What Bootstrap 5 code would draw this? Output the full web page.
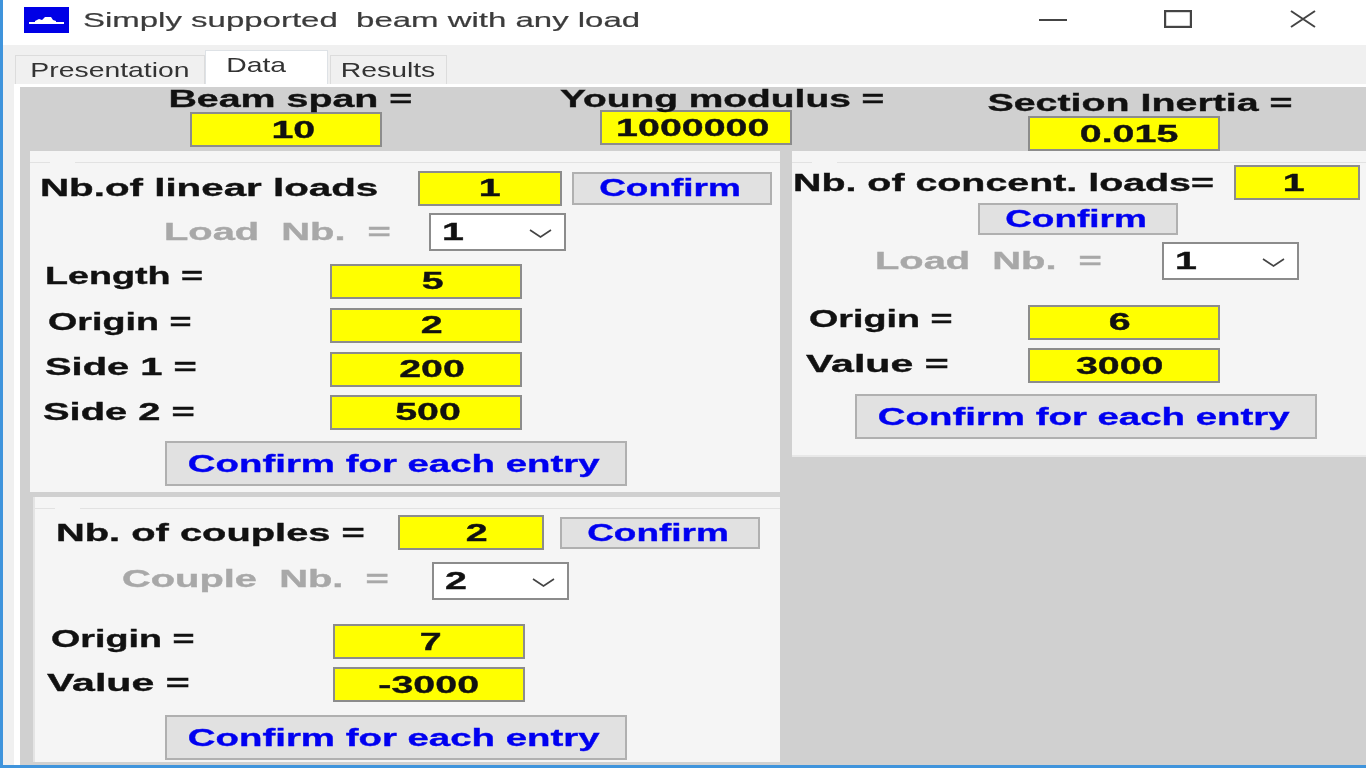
<!DOCTYPE html>
<html lang="en"><head><meta charset="utf-8"><title>Simply supported beam with any load</title>
<link href="https://cdn.jsdelivr.net/npm/bootstrap@5.3.0/dist/css/bootstrap.min.css" rel="stylesheet">
<script src="https://cdn.jsdelivr.net/npm/bootstrap@5.3.0/dist/js/bootstrap.bundle.min.js"></script>
<style>
html,body{margin:0;height:768px;overflow:hidden;background:#fff}
body{font-family:"Liberation Sans",Arial,sans-serif}
.appwin{width:1366px;height:768px;border-left:3px solid #3f94dc;border-bottom:3px solid #3f94dc;overflow:hidden;filter:blur(.5px);background:#f0f0f0;color:#111}
.sx{--k:1.64;display:inline-block;white-space:nowrap;transform:scaleX(var(--k));transform-origin:center}
.sl{transform-origin:left center}
.kb{--k:1.54}.kg{--k:1.6}.kn{--k:1.57}.kw{--k:1.71}.kl{--k:1.68}.ks{--k:1.66}.ky{--k:1.62}
.bt{font-weight:700;font-size:24px;line-height:26px;-webkit-text-stroke:.35px currentColor}
.titlebar{height:45px;background:#fff;padding-left:21px}
.logo{width:45px;height:26px;margin-top:-6px;margin-right:14px;flex:none}
.ttl{--k:1.57;font-size:21px;color:#3c3c3c;margin-top:-5px;-webkit-text-stroke:.2px currentColor}
.wbtn{flex:none}
.winctl{margin-left:auto;padding-right:49px;gap:97px;margin-top:-7px}
.tabstrip{height:39px;padding:0 0 0 12px;align-items:flex-end;border:0;background:#f0f0f0;flex-wrap:nowrap}
.tabstrip .nav-link{font-size:21px;line-height:24px;color:#333;border:1px solid #dcdcdc;border-bottom:0;border-radius:0;padding:0;height:29px;background:#f0f0f0;margin:0;display:flex;align-items:center;justify-content:center}
.tabstrip .nav-link .sx{--k:1.35}
.tabstrip .nav-link.active{height:34px;background:#fff;color:#333;padding:0 20px 6px 0}
.t1{width:190px}.t2{width:123px}.t3{width:117px;margin-left:2px!important}
.pagewrap{margin-left:11px;border-top:3px solid #fff;border-left:6px solid #fff;height:681px;background:#d0d0d0}
.pagehead{height:64px}
.hcol{flex:none;width:192px;display:flex;flex-direction:column;align-items:center}
.hc1{margin-left:170px}.hc2{margin-left:218px}.hc3{margin-left:236px}
.hlbl{height:26px;width:100%;display:flex;justify-content:center}
.hc1 .hlbl{margin-top:-1px;padding-left:9px}.hc2 .hlbl{margin-top:-1px;padding-left:52px}.hc3 .hlbl{margin-top:3px;padding-left:32px}
.hc2 .fld{margin-top:-2px}
.fld{background:#ff0;border:2px solid #8c8c8c;height:35px;display:flex;align-items:center;justify-content:center;flex:none;border-radius:0;padding:0}
.w192{width:192px}.w144{width:144px}.w146{width:146px}.w126{width:126px}
.n14{padding-left:14px}.n12{padding-left:12px}.n10{padding-left:10px}.n4{padding-left:4px}.m8{padding-right:8px}.m6{padding-right:6px}
.pbody{align-items:flex-start}
.leftcol{margin-left:10px;width:750px;flex:none}
.rightcol{margin-left:12px;width:574px;flex:none}
.grp{background:#f5f5f5;padding-top:11px}
.g1{height:341px}.g2{height:265px;margin-left:3px;margin-top:5px;width:747px;border-left:2px solid #e4e4e4}.g3{height:306px;border-bottom:2px solid #e8e8e8}
.gline{height:1px;background:linear-gradient(to right,#e2e2e2 20px,#f5f5f5 20px,#f5f5f5 45px,#e2e2e2 45px)}
.frow{display:flex;align-items:center;flex:none}
.lb{flex:none}
.btnx{background:#e1e1e1;border:2px solid #b0b0b0;border-radius:0;color:#0000f0;padding:0;display:flex;align-items:center;justify-content:center;flex:none}
.btnx:hover,.btnx:active{background:#e1e1e1!important;border-color:#b0b0b0!important;color:#0000f0!important}
.small-b{width:200px;height:33px;padding-right:4px}
.big-b{width:462px;height:45px;padding-right:4px}
.gray{color:#a8a8a8}
.cmb{width:137px;height:38px;background:#fff;border:2px solid #8c8c8c;display:flex;align-items:center;justify-content:space-between;padding:0 12px 0 11px;flex:none;border-radius:0}
.cmb svg{flex:none;margin-top:3px}
.r1{margin-top:8px;height:34px;padding-left:10px}.r1 .lb{width:378px}.r1 .btnx{margin-left:10px}
.r2{margin-top:8px;height:38px;padding-left:134px}.r2 .lb{width:265px}
.r3{margin-top:13px;height:34px}.r4,.r5{margin-top:10px;height:34px}.r6{margin-top:9px;height:34px}
.i15{padding-left:15px}.i15 .lb{width:285px}.i18{padding-left:18px}.i18 .lb{width:282px}.i13{padding-left:13px}.i13 .lb{width:287px}
.bigrow{margin-top:12px;justify-content:flex-start;padding-left:135px}
.up5 .lb{margin-bottom:10px}.up3 .lb{margin-bottom:6px}.up2 .lb{margin-bottom:4px}
.c1{margin-top:6px;height:35px;padding-left:21px}.c1 .lb{width:342px}.c1 .btnx{margin-left:16px;height:32px}
.c2{margin-top:11px;height:39px;padding-left:87px}.c2 .lb{width:310px}
.c3{margin-top:24px;height:35px;padding-left:16px}.c3 .lb{width:282px}
.c4{margin-top:8px;height:35px;padding-left:12px}.c4 .lb{width:286px}
.c5{margin-top:13px;padding-left:130px}
.k1{margin-top:2px;height:35px;padding-left:1px}.k1 .lb{width:441px}
.k2{margin-top:3px;justify-content:flex-start;padding-left:186px}
.k2 .btnx{height:32px}
.k3{margin-top:7px;height:38px;padding-left:83px}.k3 .lb{width:287px}
.k4{margin-top:25px;height:34px;padding-left:17px}.k4 .lb{width:219px}
.k5{margin-top:9px;height:35px;padding-left:14px}.k5 .lb{width:222px}
.k6{margin-top:11px;padding-left:63px}
</style></head>
<body>
<div class="appwin">
  <div class="titlebar d-flex align-items-center">
    <svg class="logo" viewBox="0 0 45 26" role="img" aria-label="Beam icon"><rect width="45" height="26" fill="#0000e6"/><path d="M5 15h35v2H5zM11 14l4-2 3 1 3-3 6 0 2 3 3 1v1H11z" fill="#fff"/></svg>
    <span class="sx sl ttl">Simply supported&nbsp; beam with any load</span>
    <div class="d-flex align-items-center winctl">
      <svg class="wbtn" width="28" height="18" viewBox="0 0 28 18"><path d="M0 10h28" stroke="#444" stroke-width="2"/></svg>
      <svg class="wbtn" width="28" height="18" viewBox="0 0 28 18"><rect x="1" y="1" width="26" height="16" fill="none" stroke="#444" stroke-width="2.4"/></svg>
      <svg class="wbtn" width="28" height="18" viewBox="0 0 28 18"><path d="M2 1l24 16M26 1L2 17" stroke="#444" stroke-width="2" fill="none"/></svg>
    </div>
  </div>
  <ul class="nav nav-tabs tabstrip">
    <li class="nav-item"><a class="nav-link t1" href="#"><span class="sx">Presentation</span></a></li>
    <li class="nav-item"><a class="nav-link active t2" href="#"><span class="sx">Data</span></a></li>
    <li class="nav-item t3"><a class="nav-link" href="#"><span class="sx">Results</span></a></li>
  </ul>
  <div class="pagewrap">
    <div class="pagehead d-flex">
      <div class="hcol hc1"><div class="hlbl bt"><span class="sx">Beam span =</span></div><div class="fld w192 bt n14"><span class="sx">10</span></div></div>
      <div class="hcol hc2"><div class="hlbl bt"><span class="sx ky">Young modulus =</span></div><div class="fld w192 bt m6"><span class="sx">1000000</span></div></div>
      <div class="hcol hc3"><div class="hlbl bt"><span class="sx">Section Inertia =</span></div><div class="fld w192 bt n10"><span class="sx">0.015</span></div></div>
    </div>
    <div class="d-flex pbody">
      <div class="leftcol">
        <div class="grp g1">
          <div class="gline"></div>
          <div class="frow r1 bt"><div class="lb"><span class="sx sl kl">Nb.of linear loads</span></div><div class="fld w144"><span class="sx">1</span></div><button class="btn btnx small-b bt" type="button"><span class="sx kb">Confirm</span></button></div>
          <div class="frow r2 bt"><div class="lb gray"><span class="sx sl ks">Load&nbsp; Nb.&nbsp; =</span></div><div class="cmb"><span class="sx sl">1</span><svg width="23" height="9" viewBox="0 0 23 9"><path d="M1 1l10.5 7L22 1" fill="none" stroke="#444" stroke-width="1.6"/></svg></div></div>
          <div class="frow r3 i15 up5 bt"><div class="lb"><span class="sx sl kn">Length =</span></div><div class="fld w192 n14"><span class="sx">5</span></div></div>
          <div class="frow r4 i18 up3 bt"><div class="lb"><span class="sx sl kn">Origin =</span></div><div class="fld w192 n12"><span class="sx">2</span></div></div>
          <div class="frow r5 i15 up2 bt"><div class="lb"><span class="sx sl ks">Side 1 =</span></div><div class="fld w192 n12"><span class="sx">200</span></div></div>
          <div class="frow r6 i13 bt"><div class="lb"><span class="sx sl ks">Side 2 =</span></div><div class="fld w192 n4"><span class="sx">500</span></div></div>
          <div class="frow bigrow"><button class="btn btnx big-b bt" type="button"><span class="sx kg">Confirm for each entry</span></button></div>
        </div>
        <div class="grp g2">
          <div class="gline"></div>
          <div class="frow c1 bt"><div class="lb"><span class="sx sl ks">Nb. of couples =</span></div><div class="fld w146 n12"><span class="sx">2</span></div><button class="btn btnx small-b bt" type="button"><span class="sx kb">Confirm</span></button></div>
          <div class="frow c2 up2 bt"><div class="lb gray"><span class="sx sl ks">Couple&nbsp; Nb.&nbsp; =</span></div><div class="cmb"><span class="sx sl">2</span><svg width="23" height="9" viewBox="0 0 23 9"><path d="M1 1l10.5 7L22 1" fill="none" stroke="#444" stroke-width="1.6"/></svg></div></div>
          <div class="frow c3 up3 bt"><div class="lb"><span class="sx sl kn">Origin =</span></div><div class="fld w192 n4"><span class="sx">7</span></div></div>
          <div class="frow c4 up2 bt"><div class="lb"><span class="sx sl kw">Value =</span></div><div class="fld w192"><span class="sx">-3000</span></div></div>
          <div class="frow c5"><button class="btn btnx big-b bt" type="button"><span class="sx kg">Confirm for each entry</span></button></div>
        </div>
      </div>
      <div class="rightcol">
        <div class="grp g3">
          <div class="gline"></div>
          <div class="frow k1 bt"><div class="lb"><span class="sx sl">Nb. of concent. loads=</span></div><div class="fld w126 m6"><span class="sx">1</span></div></div>
          <div class="frow k2"><button class="btn btnx small-b bt" type="button"><span class="sx kb">Confirm</span></button></div>
          <div class="frow k3 bt"><div class="lb gray"><span class="sx sl ks">Load&nbsp; Nb.&nbsp; =</span></div><div class="cmb"><span class="sx sl">1</span><svg width="23" height="9" viewBox="0 0 23 9"><path d="M1 1l10.5 7L22 1" fill="none" stroke="#444" stroke-width="1.6"/></svg></div></div>
          <div class="frow k4 up3 bt"><div class="lb"><span class="sx sl kn">Origin =</span></div><div class="fld w192 m8"><span class="sx">6</span></div></div>
          <div class="frow k5 up2 bt"><div class="lb"><span class="sx sl kw">Value =</span></div><div class="fld w192 m8"><span class="sx">3000</span></div></div>
          <div class="frow k6"><button class="btn btnx big-b bt" type="button"><span class="sx kg">Confirm for each entry</span></button></div>
        </div>
      </div>
    </div>
  </div>
</div>
</body></html>
